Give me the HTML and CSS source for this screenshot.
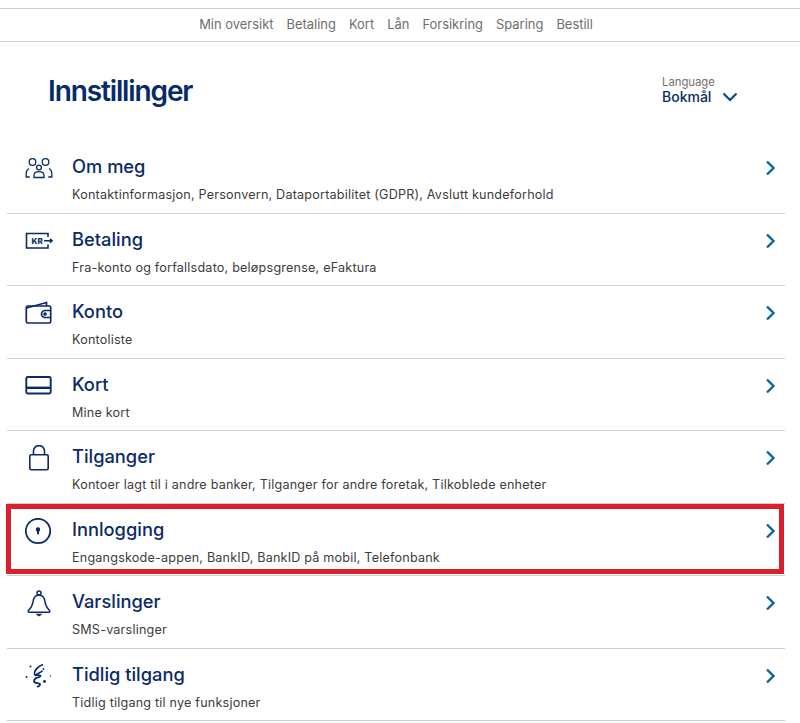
FILE: index.html
```html
<!DOCTYPE html>
<html lang="no">
<head>
<meta charset="utf-8">
<title>Innstillinger</title>
<link rel="stylesheet" href="styles.css">
</head>
<body>
<nav class="topnav">
  <a>Min oversikt</a><a>Betaling</a><a>Kort</a><a>Lån</a><a>Forsikring</a><a>Sparing</a><a>Bestill</a>
</nav>
<header class="head">
  <h1>Innstillinger</h1>
  <div class="lang">
    <span class="lang-label">Language</span>
    <span class="lang-value">Bokmål
      <svg class="lang-chev" width="16" height="10" viewBox="0 0 16 10"><path d="M1.5 1.5 8 8l6.5-6.5" fill="none" stroke="#0a4a7d" stroke-width="2.2"/></svg>
    </span>
  </div>
</header>
<ul class="list">
  <li class="row">
    <svg class="ico" width="30" height="30" viewBox="0 0 30 30" fill="none" stroke="#0b2a66" stroke-width="1.300"><circle cx="7.500" cy="7" r="3.300"/><circle cx="20.500" cy="7" r="3.300"/><circle cx="14" cy="12.500" r="2.400"/><path d="M4 13.500C2 14.500 1.200 16.500 1.200 18.500v3.500h3.500M24 13.500c2 1 2.800 3 2.800 5v3.500h-3.500M9 22.500v-2c0-2.500 2-3.800 5-3.800s5 1.300 5 3.800v2z"/></svg>
    <div class="txt"><h2>Om meg</h2><p>Kontaktinformasjon, Personvern, Dataportabilitet (GDPR), Avslutt kundeforhold</p></div>
    <svg class="chev" width="11" height="16" viewBox="0 0 11 16"><path d="M2 1.500 8.500 8 2 14.500" fill="none" stroke="#0a64a0" stroke-width="2.400"/></svg>
  </li>
  <li class="row">
    <svg class="ico" width="30" height="30" viewBox="0 0 30 30" fill="none" stroke="#0b2a66" stroke-width="1.600"><path d="M23 9V5.500H1.500v14.500H23v-3.500"/><path d="M19 12.800h7.500M25 10.800l2 2-2 2" stroke-width="1.600"/><text x="6.500" y="15.800" class="kr">KR</text></svg>
    <div class="txt"><h2>Betaling</h2><p>Fra-konto og forfallsdato, beløpsgrense, eFaktura</p></div>
    <svg class="chev" width="11" height="16" viewBox="0 0 11 16"><path d="M2 1.500 8.500 8 2 14.500" fill="none" stroke="#0a64a0" stroke-width="2.400"/></svg>
  </li>
  <li class="row">
    <svg class="ico" width="30" height="30" viewBox="0 0 30 30" fill="none" stroke="#0b2a66" stroke-width="1.700"><path d="M1.500 8 21.500 2.500V6"/><rect x="1.300" y="6" width="24.400" height="17" rx="1.500"/><path d="M25.500 10.500h-5.500a2.500 2.500 0 0 0 0 7h5.500"/><circle cx="20" cy="14" r="1"/></svg>
    <div class="txt"><h2>Konto</h2><p>Kontoliste</p></div>
    <svg class="chev" width="11" height="16" viewBox="0 0 11 16"><path d="M2 1.500 8.500 8 2 14.500" fill="none" stroke="#0a64a0" stroke-width="2.400"/></svg>
  </li>
  <li class="row">
    <svg class="ico" width="30" height="30" viewBox="0 0 30 30" fill="none" stroke="#0b2a66" stroke-width="1.900"><rect x="1.300" y="4" width="24.400" height="16.500" rx="1.500"/><path d="M1.500 14.800h24" stroke-width="2.400"/></svg>
    <div class="txt"><h2>Kort</h2><p>Mine kort</p></div>
    <svg class="chev" width="11" height="16" viewBox="0 0 11 16"><path d="M2 1.500 8.500 8 2 14.500" fill="none" stroke="#0a64a0" stroke-width="2.400"/></svg>
  </li>
  <li class="row">
    <svg class="ico" width="30" height="30" viewBox="0 0 30 30" fill="none" stroke="#0b2a66" stroke-width="1.600"><rect x="4.800" y="9.800" width="18.400" height="15" rx="1.500"/><path d="M8.500 9.800V5.800a5.500 5.200 0 0 1 11 0v4"/></svg>
    <div class="txt"><h2>Tilganger</h2><p>Kontoer lagt til i andre banker, Tilganger for andre foretak, Tilkoblede enheter</p></div>
    <svg class="chev" width="11" height="16" viewBox="0 0 11 16"><path d="M2 1.500 8.500 8 2 14.500" fill="none" stroke="#0a64a0" stroke-width="2.400"/></svg>
  </li>
  <li class="row row-marked">
    <svg class="ico" width="30" height="30" viewBox="0 0 30 30" fill="none" stroke="#0b2a66" stroke-width="1.800"><circle cx="13" cy="13" r="12.200"/><circle cx="13" cy="11.500" r="1.300" fill="#0b2a66"/><path d="M13 11.500v4.800" stroke-width="2"/></svg>
    <div class="txt"><h2>Innlogging</h2><p>Engangskode-appen, BankID, BankID på mobil, Telefonbank</p></div>
    <svg class="chev" width="11" height="16" viewBox="0 0 11 16"><path d="M2 1.500 8.500 8 2 14.500" fill="none" stroke="#0a64a0" stroke-width="2.400"/></svg>
  </li>
  <li class="row">
    <svg class="ico" width="30" height="30" viewBox="0 0 30 30" fill="none" stroke="#0b2a66" stroke-width="1.500"><circle cx="14" cy="3" r="2"/><path d="M14 5c-4 0-5.500 3-6 7-.5 3.500-2 6-4.500 8.500-.8 1 0 1.800 1 1.800h19c1 0 1.800-.8 1-1.800-2.500-2.500-4-5-4.500-8.500-.5-4-2-7-6-7z"/><path d="M11.500 24.300h5L14 26z" fill="#0b2a66" stroke-width="1"/></svg>
    <div class="txt"><h2>Varslinger</h2><p>SMS-varslinger</p></div>
    <svg class="chev" width="11" height="16" viewBox="0 0 11 16"><path d="M2 1.500 8.500 8 2 14.500" fill="none" stroke="#0a64a0" stroke-width="2.400"/></svg>
  </li>
  <li class="row">
    <svg class="ico" width="30" height="30" viewBox="0 0 30 30" fill="none" stroke="#0b2a66" stroke-width="1.800"><path d="M18 1.500C13 3 9 8 9.500 11c.5 2 5.500.2 6 1.800.5 2-6.500 1.200-6.500 5.200 0 3 5 1.500 6 3 .5 2-2 2.500-3 2.800"/><path d="M10 13c2.500-3.500 7-3.500 7.500-5.500" stroke-width="1.500"/><circle cx="5.500" cy="3.500" r="1" fill="#0b2a66" stroke="none"/><circle cx="1.500" cy="14" r="1" fill="#0b2a66" stroke="none"/><circle cx="18.500" cy="6" r=".9" fill="#0b2a66" stroke="none"/><circle cx="25.500" cy="13" r=".7" fill="#0b2a66" stroke="none"/><circle cx="19.500" cy="18.500" r="1.400" fill="#0b2a66" stroke="none"/></svg>
    <div class="txt"><h2>Tidlig tilgang</h2><p>Tidlig tilgang til nye funksjoner</p></div>
    <svg class="chev" width="11" height="16" viewBox="0 0 11 16"><path d="M2 1.500 8.500 8 2 14.500" fill="none" stroke="#0a64a0" stroke-width="2.400"/></svg>
  </li>
</ul>
</body>
</html>
```
FILE: styles.css
```css
* { box-sizing: border-box; }
html, body { margin: 0; padding: 0; background: #fff; }
body {
  width: 800px;
  height: 723px;
  overflow: hidden;
  padding-top: 8px;
  font-family: "Inter", "Liberation Sans", sans-serif;
  color: #0b2a66;
}
.topnav {
  height: 34px;
  border-top: 1px solid #cfcfcf;
  border-bottom: 1px solid #cfcfcf;
  display: flex;
  justify-content: center;
  align-items: center;
  gap: 13px;
  padding: 0 8px 2px 0;
  font-size: 12.950px;
  color: #6e6e6e;
}
.head {
  display: flex;
  justify-content: space-between;
  align-items: flex-start;
  height: 99px;
  padding: 30px 62px 0 48px;
}
.head h1 {
  margin: 0;
  font-size: 28px;
  line-height: 38px;
  font-weight: 600;
  letter-spacing: -1.120px;
  color: #062a6b;
}
.lang { display: flex; flex-direction: column; margin-top: 4px; width: 76px; }
.lang-label { font-size: 11.300px; line-height: 13px; color: #707070; }
.lang-value {
  display: flex;
  align-items: center;
  gap: 11px;
  font-size: 14px;
  line-height: 15px;
  font-weight: 500;
  white-space: nowrap;
}
.lang-chev { flex: none; }
.list {
  list-style: none;
  margin: 0 15px 0 7px;
  padding: 0;
}
.row {
  position: relative;
  height: 72.500px;
  display: flex;
  align-items: flex-start;
  padding-top: 13px;
  border-bottom: 1px solid #cfcfcf;
}
.ico { flex: none; margin: 1px 0 0 18px; }
.txt { flex: 1; margin-left: 17px; }
.txt h2 {
  margin: 0;
  font-size: 18.300px;
  line-height: 24px;
  font-weight: 500;
  color: #0b2a66;
}
.txt p {
  margin: 9px 0 0;
  font-size: 12.600px;
  letter-spacing: 0.200px;
  line-height: 16px;
  color: #3c3c3c;
  white-space: nowrap;
}
.chev { flex: none; margin: 6px 9px 0 0; }
.kr { font: 800 8px "Inter", sans-serif; fill: #0b2a66; stroke: none; }
.row-marked::after {
  content: "";
  position: absolute;
  left: -1px;
  right: 1px;
  top: 0;
  bottom: 1px;
  border: 5px solid #d9202c;
  pointer-events: none;
}
```
